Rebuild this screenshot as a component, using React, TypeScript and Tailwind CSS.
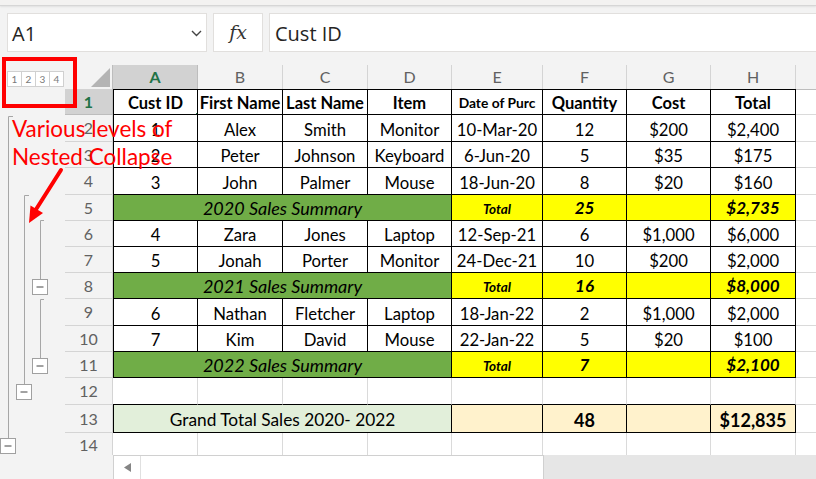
import type { ReactNode } from "react";

// grid columns: row header, A..H, and the clipped I column
const ROW = "grid grid-cols-[48px_85px_85px_85px_84px_91px_84px_84px_85px_1fr]";
const COLS = ["A", "B", "C", "D", "E", "F", "G", "H"];

function Cell({ children, className = "" }: { children?: ReactNode; className?: string }) {
  return (
    <div
      className={`flex items-end justify-center overflow-hidden whitespace-nowrap pb-[1px] leading-[20px] text-black ${className}`}
    >
      {children}
    </div>
  );
}

function RowHead({ n, active, last }: { n: number; active?: boolean; last?: boolean }) {
  if (active) {
    return (
      <div className="flex items-center justify-center border-r border-b border-[#bdbdbd] bg-[#d2d2d2] text-[16px] font-bold text-[#217346]">
        {n}
      </div>
    );
  }
  return (
    <div
      className={`flex items-center justify-center border-r border-[#d4d4d4] bg-[#f3f3f3] text-[16px] text-[#616161] ${
        last ? "" : "border-b"
      }`}
    >
      {n}
    </div>
  );
}

const GRID_END = "border-b border-[#dadada]";
const T = "border-r border-b border-black";
const T_FIRST = "border-x border-b border-black";

const sales: { n: number; h: string; v: string[] }[][] = [
  [
    { n: 2, h: "h-[27px]", v: ["1", "Alex", "Smith", "Monitor", "10-Mar-20", "12", "$200", "$2,400"] },
    { n: 3, h: "h-[26px]", v: ["2", "Peter", "Johnson", "Keyboard", "6-Jun-20", "5", "$35", "$175"] },
    { n: 4, h: "h-[27px]", v: ["3", "John", "Palmer", "Mouse", "18-Jun-20", "8", "$20", "$160"] },
  ],
  [
    { n: 6, h: "h-[26px]", v: ["4", "Zara", "Jones", "Laptop", "12-Sep-21", "6", "$1,000", "$6,000"] },
    { n: 7, h: "h-[26px]", v: ["5", "Jonah", "Porter", "Monitor", "24-Dec-21", "10", "$200", "$2,000"] },
  ],
  [
    { n: 9, h: "h-[27px]", v: ["6", "Nathan", "Fletcher", "Laptop", "18-Jan-22", "2", "$1,000", "$2,000"] },
    { n: 10, h: "h-[26px]", v: ["7", "Kim", "David", "Mouse", "22-Jan-22", "5", "$20", "$100"] },
  ],
];

const summaries = [
  { n: 5, year: "2020", qty: "25", total: "$2,735" },
  { n: 8, year: "2021", qty: "16", total: "$8,000" },
  { n: 11, year: "2022", qty: "7", total: "$2,100" },
];

function DataRow({ n, h, v }: { n: number; h: string; v: string[] }) {
  return (
    <div className={`${ROW} ${h}`}>
      <RowHead n={n} />
      {v.map((x, i) => (
        <Cell key={i} className={`text-[16.7px] ${i === 0 ? T_FIRST : T}`}>
          {x}
        </Cell>
      ))}
      <Cell className={GRID_END} />
    </div>
  );
}

function SummaryRow({ n, year, qty, total }: { n: number; year: string; qty: string; total: string }) {
  return (
    <div className={`${ROW} h-[26px]`}>
      <RowHead n={n} />
      <Cell className={`col-span-4 bg-[#70ad47] pb-[2px] text-[18px] italic ${T_FIRST}`}>{year} Sales Summary</Cell>
      <Cell className={`bg-[#ffff00] pb-[1px] text-[13.5px] font-bold italic ${T}`}>Total</Cell>
      <Cell className={`bg-[#ffff00] pb-[2px] text-[17px] font-bold italic ${T}`}>{qty}</Cell>
      <Cell className={`bg-[#ffff00] ${T}`} />
      <Cell className={`bg-[#ffff00] pb-[2px] text-[17px] font-bold italic ${T}`}>{total}</Cell>
      <Cell className={GRID_END} />
    </div>
  );
}

function Outline() {
  return (
    <svg width="65" height="366" viewBox="0 89 65 366" className="block">
      <g stroke="#a6a6a6" strokeWidth="1" fill="none">
        <path d="M13 116.5H8.5V438" />
        <path d="M29 195.5H24.5V385" />
        <path d="M44 220.5H40.5V279" />
        <path d="M44 299.5H40.5V358" />
      </g>
      {[
        [32.5, 279.5],
        [32.5, 358.5],
        [16.5, 384.5],
        [0.5, 438.5],
      ].map(([x, y]) => (
        <g key={`${x}-${y}`}>
          <rect x={x} y={y} width="15" height="15" fill="#fff" stroke="#a0a0a0" />
          <path d={`M${x + 4} ${y + 7.5}H${x + 11}`} stroke="#444" strokeWidth="1" />
        </g>
      ))}
    </svg>
  );
}

export default function App() {
  return (
    <div className="relative h-[479px] w-[816px] overflow-hidden bg-[#f3f3f3] font-['Lato',sans-serif]">
      {/* strip under the ribbon */}
      <div className="h-[6px] border-b border-[#d6d6d6] bg-[#f3f2f1] shadow-[0_1px_2px_rgba(0,0,0,0.08)]" />

      {/* formula bar */}
      <div className="flex h-[59px] items-start pt-[7px] font-['Open_Sans',sans-serif]">
        <div className="ml-[7px] flex h-[39px] w-[200px] items-center justify-between border border-[#e1dfdd] bg-white pt-[2px] pl-[4px] pr-[4px]">
          <span className="text-[20px] text-[#252423]">A1</span>
          <svg width="11" height="7" viewBox="0 0 11 7">
            <path d="M1 1l4.5 4.5L10 1" stroke="#444" strokeWidth="1.4" fill="none" />
          </svg>
        </div>
        <div className="ml-[6px] flex h-[39px] w-[50px] items-center justify-center border border-[#e1dfdd] bg-white">
          <span className="font-['DejaVu_Serif',serif] text-[19px] italic text-[#333]">fx</span>
        </div>
        <div className="ml-[6px] flex h-[39px] flex-1 items-center border-y border-l border-[#e1dfdd] bg-white pt-[2px] pl-[5px]">
          <span className="text-[20px] text-[#252423]">Cust ID</span>
        </div>
      </div>

      {/* sheet */}
      <div className="flex h-[390px]">
        <div className="flex w-[65px] flex-col">
          <div className="flex h-[24px] items-start pl-[7px] pt-[6px]">
            {["1", "2", "3", "4"].map((l) => (
              <div
                key={l}
                className="-mr-px flex h-[16px] w-[15px] items-center justify-center border border-[#d0d0d0] bg-white text-[10px] text-[#7a7a7a]"
              >
                {l}
              </div>
            ))}
          </div>
          <Outline />
        </div>

        <div className="flex flex-1 flex-col bg-white">
          {/* column headers */}
          <div className={`${ROW} h-[24px]`}>
            <div className="flex items-end justify-end border-r border-b border-[#bdbdbd] bg-[#f3f3f3] pr-[2px] pb-[2px]">
              <svg width="19" height="19" viewBox="0 0 19 19">
                <path d="M0 19H19V0Z" fill="#b4b4b4" />
              </svg>
            </div>
            {COLS.map((c) => (
              <div
                key={c}
                className={
                  c === "A"
                    ? "flex items-center justify-center border-r border-b border-[#bdbdbd] bg-[#d2d2d2] text-[16px] font-bold text-[#217346]"
                    : "flex items-center justify-center border-r border-b border-[#d4d4d4] border-b-[#bdbdbd] bg-[#f3f3f3] text-[16px] text-[#616161]"
                }
              >
                {c}
              </div>
            ))}
            <div className="border-b border-[#bdbdbd] bg-[#f3f3f3]" />
          </div>

          {/* row 1 */}
          <div className={`${ROW} h-[26px]`}>
            <RowHead n={1} active />
            <Cell className="relative border border-black pb-0 text-[16.5px] font-bold">
              Cust ID
              <span className="absolute -top-[2px] -right-[2px] -bottom-[3px] -left-[2px] border-2 border-[#217346]" />
              <span className="absolute -right-[5px] -bottom-[5px] h-[7px] w-[7px] border border-white bg-[#217346]" />
            </Cell>
            {["First Name", "Last Name", "Item"].map((x) => (
              <Cell key={x} className="border-y border-r border-black pb-0 text-[16.5px] font-bold">
                {x}
              </Cell>
            ))}
            <Cell className="border-y border-r border-black pb-[1px] text-[13.8px] font-bold">Date of Purc</Cell>
            {["Quantity", "Cost", "Total"].map((x) => (
              <Cell key={x} className="border-y border-r border-black pb-0 text-[16.5px] font-bold">
                {x}
              </Cell>
            ))}
            <Cell className={GRID_END} />
          </div>

          {sales.map((group, gi) => (
            <div key={gi} className="contents">
              {group.map((r) => (
                <DataRow key={r.n} {...r} />
              ))}
              <SummaryRow {...summaries[gi]} />
            </div>
          ))}

          {/* row 12 */}
          <div className={`${ROW} h-[27px]`}>
            <RowHead n={12} />
            {COLS.map((c) => (
              <Cell key={c} className="border-r border-b border-r-[#dadada] border-b-black" />
            ))}
            <Cell className={GRID_END} />
          </div>

          {/* row 13 */}
          <div className={`${ROW} h-[28px]`}>
            <RowHead n={13} />
            <Cell className={`col-span-4 bg-[#e2efda] pb-[2px] text-[17.3px] ${T_FIRST}`}>Grand Total Sales 2020- 2022</Cell>
            <Cell className={`bg-[#fff2cc] ${T}`} />
            <Cell className={`bg-[#fff2cc] pb-[2px] text-[18px] font-bold ${T}`}>48</Cell>
            <Cell className={`bg-[#fff2cc] ${T}`} />
            <Cell className={`bg-[#fff2cc] pb-[2px] text-[18px] font-bold ${T}`}>$12,835</Cell>
            <Cell className={GRID_END} />
          </div>

          {/* row 14 */}
          <div className={`${ROW} h-[22px]`}>
            <RowHead n={14} last />
            {COLS.map((c) => (
              <Cell key={c} className="border-r border-[#dadada]" />
            ))}
            <Cell />
          </div>
        </div>
      </div>

      {/* horizontal scroll bar */}
      <div className="flex h-[24px]">
        <div className="w-[113px] bg-[#f3f3f3]" />
        <div className="flex w-[431px] border-t border-l border-r border-[#d0d0d0] bg-white">
          <div className="flex w-[27px] items-center justify-center border-r border-[#e0e0e0]">
            <svg width="7" height="9" viewBox="0 0 7 9">
              <path d="M7 0V9L0 4.5Z" fill="#858585" />
            </svg>
          </div>
        </div>
        <div className="flex-1 bg-[#e6e6e6]" />
      </div>

      {/* red annotations */}
      <div className="absolute top-[57px] left-[2px] h-[51px] w-[75px] border-4 border-[#ff0000]" />
      <div className="absolute top-[115px] left-[12px] text-[22.5px] leading-[28px] text-[#ff0000]">
        <div>Various levels of</div>
        <div>Nested Collapse</div>
      </div>
      <svg className="absolute top-[160px] left-[20px]" width="50" height="70" viewBox="20 160 50 70">
        <path d="M61 170L35 211" stroke="#ff0000" strokeWidth="4" strokeLinecap="round" />
        <path d="M29 223L43 213L30.5 205.5Z" fill="#ff0000" />
      </svg>
    </div>
  );
}
